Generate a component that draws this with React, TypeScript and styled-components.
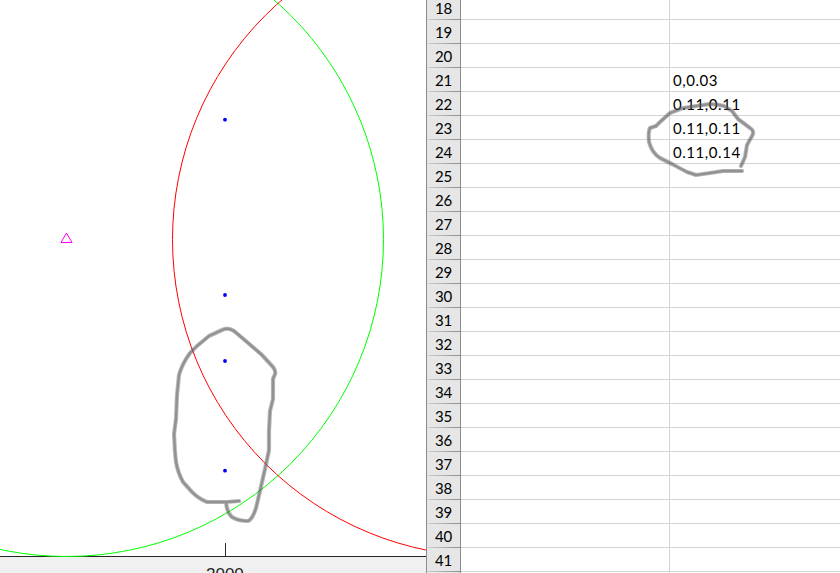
import React from "react";
import styled, { createGlobalStyle } from "styled-components";

const GlobalStyle = createGlobalStyle`
  body { margin: 0; background: #fff; overflow: hidden; }
`;

const Screen = styled.main`
  position: relative;
  display: flex;
  width: 840px;
  height: 573px;
  overflow: hidden;
  background: #fff;
`;

const Figure = styled.section`
  display: flex;
  flex-direction: column;
  width: 426px;
  height: 573px;
  overflow: hidden;
`;

const Plot = styled.svg`
  display: block;
  flex: none;
  width: 426px;
  height: 557px;
`;

const AxisStrip = styled.div`
  flex: 1;
  box-sizing: border-box;
  padding: 8px 0 0 206px;
  background: #f0f0f0;
  color: #262626;
  font: 17px/20px "Liberation Sans", Arial, sans-serif;
`;

const Sheet = styled.section`
  flex: 1;
  height: 573px;
  overflow: hidden;
  box-sizing: border-box;
  border-left: 1px solid #8c8c8c;
`;

const SheetRow = styled.div<{ $clipped?: boolean }>`
  display: grid;
  grid-template-columns: 34px 209px 1fr;
  grid-template-rows: ${(p) => (p.$clipped ? 20 : 24)}px;
`;

const Cell = styled.div`
  display: flex;
  align-items: flex-end;
  box-sizing: border-box;
  border-right: 1px solid #d4d4d4;
  border-bottom: 1px solid #d4d4d4;
  padding: 0 0 3px 3px;
  color: #000;
  font: 15px/16px Lato, Calibri, sans-serif;
  font-kerning: none;
  letter-spacing: 0.55px;
  white-space: nowrap;

  &:last-child {
    border-right: 0;
  }
`;

const RowHeader = styled(Cell)`
  justify-content: center;
  padding-left: 0;
  letter-spacing: -0.1px;
  border-right-color: #8c8c8c;
  border-bottom: 0;
  background:
    linear-gradient(to right, #d0d0d0, #8c8c8c) bottom / 100% 1px no-repeat,
    #e6e6e6;
  padding-bottom: 4px;
`;

const Ink = styled.svg`
  position: absolute;
  inset: 0;
  width: 840px;
  height: 573px;
  pointer-events: none;
`;

const values: Record<number, string> = {
  21: "0,0.03",
  22: "0.11,0.11",
  23: "0.11,0.11",
  24: "0.11,0.14",
};

const rows = Array.from({ length: 25 }, (_, i) => 18 + i);
const points = [119.7, 295, 361, 470.7];

const strokes = [
  "M239 501 L227 502 L207 502 Q199 499 192 492 L183 482 Q178 473 176 462 L175 452 L174 434 L176 419 L177 395 L179 375 Q182 364 190 353 L197 346 L209 336 L222 330 Q228 327 234 331 L247 342 L262 355 L273 367 Q276 371 275 374 L273 379 L273 399 L270 411 L269 431 L269 450 L265 469 L260 491 L256 508 Q252 520 248 521 Q238 521 232 517 Q227 513 226 502",
  "M741 166 L745 157 L747 145 L752 136 Q755 131 750 128 L738 119 L732 111 L724 106 Q713 103 703 105 L683 108 L670 113 L660 122 L656 126 L650 128 Q648 132 649 142 Q652 153 660 158 L672 164 L687 172 L696 175 L710 173 L723 171 L742 171",
];

export default function App() {
  return (
    <Screen>
      <GlobalStyle />
      <Figure>
        <Plot viewBox="0 0 426 557">
          <path d="M0 556.5H426M225.5 543V557" stroke="#262626" fill="none" />
          <circle cx="66.5" cy="239.5" r="317" fill="none" stroke="#00ff00" />
          <circle cx="489.5" cy="239.5" r="317" fill="none" stroke="#ff0000" />
          <path d="M66.5 233 L61 242.5 H72 Z" fill="none" stroke="#ff00ff" />
          {points.map((y) => (
            <circle key={y} cx="225" cy={y} r="1.9" fill="#0000ff" />
          ))}
        </Plot>
        <AxisStrip>2000</AxisStrip>
      </Figure>
      <Sheet>
        {rows.map((row) => (
          <SheetRow key={row} $clipped={row === 18}>
            <RowHeader>{row < 42 ? row : ""}</RowHeader>
            <Cell />
            <Cell>{values[row]}</Cell>
          </SheetRow>
        ))}
      </Sheet>
      <Ink viewBox="0 0 840 573" fill="none" stroke="#555" strokeLinecap="round" strokeLinejoin="round">
        {strokes.map((d) => (
          <g key={d}>
            <path d={d} strokeWidth="4.2" strokeOpacity="0.4" />
            <path d={d} strokeWidth="2.4" strokeOpacity="0.4" />
          </g>
        ))}
      </Ink>
    </Screen>
  );
}
